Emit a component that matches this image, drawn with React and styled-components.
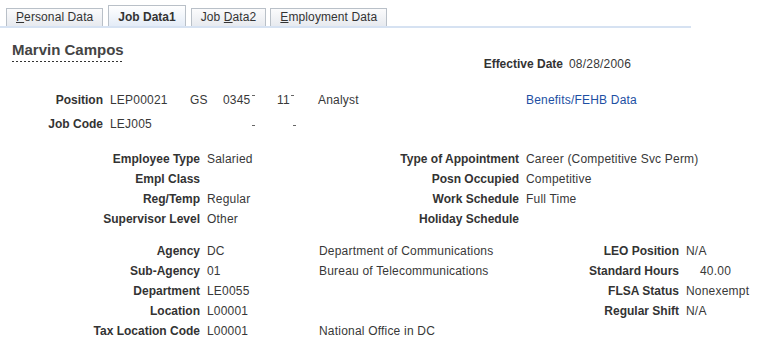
import React from 'react'
import styled, {createGlobalStyle, css} from 'styled-components'

const GlobalStyle = createGlobalStyle`
  body {
    margin: 0;
    background: #fff;
    color: #333;
    font-family: "Liberation Sans", Arial, sans-serif;
    font-size: 12px;
  }
`

const Page = styled.div`
  width: 771px;
  height: 347px;
  overflow: hidden;
`

const TabStrip = styled.div`
  display: flex;
  align-items: flex-end;
  gap: 4px;
  width: 685px;
  height: 26px;
  padding-left: 6px;
  border-bottom: 2px solid #d6e2f2;
`

const Tab = styled.div`
  height: 17px;
  line-height: 17px;
  padding: 0 9px;
  border: 1px solid #b9c0c8;
  border-bottom: none;
  background: linear-gradient(#fbfbfc, #e7eaef);
  color: #333;
  white-space: nowrap;
  letter-spacing: 0.1px;

  u { text-decoration: underline; }

  ${props => props.selected ? css`
    height: 20px;
    line-height: 22px;
    margin: 0 1px;
    font-weight: bold;
    letter-spacing: 0;
    background: linear-gradient(#ffffff, #e4ecf7);
  ` : ''}
`

const Header = styled.div`
  display: flex;
  align-items: flex-start;
  padding-left: 12px;
  margin-top: 13px;
`

const NameBox = styled.div`
  width: 460px;
`

const Name = styled.span`
  display: inline-block;
  font-size: 15px;
  font-weight: bold;
  line-height: 18px;
  color: #444;
  padding-bottom: 3px;
  background-image: linear-gradient(to right, #333 50%, transparent 50%);
  background-size: 4px 1px;
  background-repeat: repeat-x;
  background-position: 0 100%;
`

const EffRow = styled.div`
  display: flex;
  margin-top: 15px;
  line-height: 16px;
`

const Label = styled.div`
  font-weight: bold;
  text-align: right;
  white-space: nowrap;
  color: #333;
  ${props => props.width ? css`width: ${props.width}px;` : ''}
`

const Value = styled.div`
  white-space: nowrap;
  color: #383838;
  letter-spacing: 0.2px;
  ${props => props.indent ? css`padding-left: ${props.indent}px;` : ''}
`

const EffValue = styled(Value)`
  margin-left: 6px;
`

const Grid = styled.div`
  display: grid;
  grid-template-columns: ${props => props.columns};
  grid-auto-rows: ${props => props.rowHeight}px;
  line-height: ${props => props.rowHeight}px;
  column-gap: 7px;
  margin-top: ${props => props.top}px;
`

const Link = styled.a`
  color: #1d4fa3;
  text-decoration: none;
  white-space: nowrap;
  letter-spacing: 0.2px;
`

const Tick = styled.span`
  display: inline-block;
  width: 3px;
  height: 1px;
  background: #666;
  vertical-align: top;
  margin-top: ${props => props.low ? 13 : 7}px;
  margin-left: ${props => props.offset || 1}px;
`

export default function App () {
  return (
    <Page>
      <GlobalStyle />
      <TabStrip>
        <Tab><u>P</u>ersonal Data</Tab>
        <Tab selected>Job Data1</Tab>
        <Tab>Job <u>D</u>ata2</Tab>
        <Tab><u>E</u>mployment Data</Tab>
      </TabStrip>

      <Header>
        <NameBox>
          <Name>Marvin Campos</Name>
        </NameBox>
        <EffRow>
          <Label width={91}>Effective Date</Label>
          <EffValue>08/28/2006</EffValue>
        </EffRow>
      </Header>

      <Grid columns='103px 73px 26px 47px 34px 201px auto' rowHeight={24} top={16}>
        <Label>Position</Label>
        <Value>LEP00021</Value>
        <Value>GS</Value>
        <Value>0345<Tick /></Value>
        <Value>11<Tick /></Value>
        <Value>Analyst</Value>
        <Link href='#'>Benefits/FEHB Data</Link>

        <Label>Job Code</Label>
        <Value>LEJ005</Value>
        <Value />
        <Value><Tick low offset={29} /></Value>
        <Value><Tick low offset={16} /></Value>
        <Value />
        <Value />
      </Grid>

      <Grid columns='200px 180px 125px auto' rowHeight={20} top={13}>
        <Label>Employee Type</Label>
        <Value>Salaried</Value>
        <Label>Type of Appointment</Label>
        <Value>Career (Competitive Svc Perm)</Value>

        <Label>Empl Class</Label>
        <Value />
        <Label>Posn Occupied</Label>
        <Value>Competitive</Value>

        <Label>Reg/Temp</Label>
        <Value>Regular</Value>
        <Label>Work Schedule</Label>
        <Value>Full Time</Value>

        <Label>Supervisor Level</Label>
        <Value>Other</Value>
        <Label>Holiday Schedule</Label>
        <Value />
      </Grid>

      <Grid columns='200px 105px 230px 123px auto' rowHeight={20} top={12}>
        <Label>Agency</Label>
        <Value>DC</Value>
        <Value>Department of Communications</Value>
        <Label>LEO Position</Label>
        <Value>N/A</Value>

        <Label>Sub-Agency</Label>
        <Value>01</Value>
        <Value>Bureau of Telecommunications</Value>
        <Label>Standard Hours</Label>
        <Value indent={14}>40.00</Value>

        <Label>Department</Label>
        <Value>LE0055</Value>
        <Value />
        <Label>FLSA Status</Label>
        <Value>Nonexempt</Value>

        <Label>Location</Label>
        <Value>L00001</Value>
        <Value />
        <Label>Regular Shift</Label>
        <Value>N/A</Value>

        <Label>Tax Location Code</Label>
        <Value>L00001</Value>
        <Value>National Office in DC</Value>
        <Value />
        <Value />
      </Grid>
    </Page>
  )
}
